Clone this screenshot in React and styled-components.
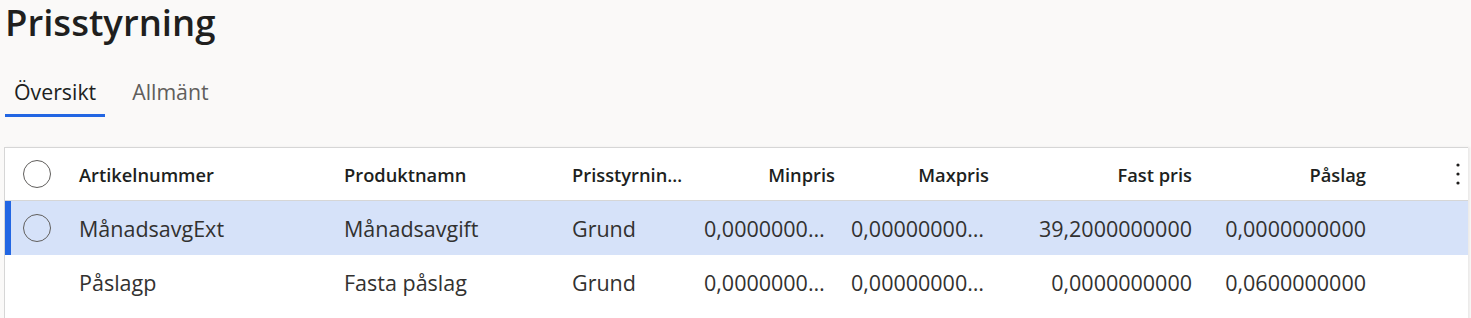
import React from "react";
import styled, { createGlobalStyle } from "styled-components";

const GlobalStyle = createGlobalStyle`
  body {
    margin: 0;
    background: #faf9f8;
    font-family: "Open Sans", "Noto Sans", sans-serif;
    color: #323130;
  }
`;

const Page = styled.div`
  padding: 0 0 0 4px;
  overflow: hidden;
  height: 318px;
`;

const Title = styled.h1`
  margin: 0;
  padding: 0 0 0 1px;
  font-size: 36.5px;
  line-height: 44px;
  font-weight: 600;
  color: #201f1e;
`;

const Tabs = styled.div`
  display: flex;
  gap: 18px;
  margin-top: 33px;
  padding-left: 1px;
`;

const Tab = styled.div`
  padding: 0 9px;
  height: 40px;
  font-size: 21.3px;
  line-height: 30px;
  color: ${(p) => (p.active ? "#201f1e" : "#605e5c")};
  border-bottom: 3px solid ${(p) => (p.active ? "#2266e3" : "transparent")};
  box-sizing: border-box;
`;

const Grid = styled.div`
  margin-top: 30px;
  background: #fff;
  border-top: 1px solid #d6d6d6;
  border-left: 1px solid #d6d6d6;
  margin-right: 3px;
  box-shadow: 2px 0 2px rgba(0, 0, 0, 0.06);
  height: 200px;
`;

const cols = "66px 265px 228px 132px 147px 154px 203px 174px 1fr";

const Row = styled.div`
  display: grid;
  grid-template-columns: ${cols};
  align-items: center;
  position: relative;
  height: ${(p) => (p.header ? "52px" : "54px")};
  background: ${(p) => (p.selected ? "#d6e2f9" : "transparent")};
  border-bottom: ${(p) => (p.header ? "1px solid #d6d6d6" : "none")};
  font-size: ${(p) => (p.header ? "18.3px" : "21.5px")};
  font-weight: ${(p) => (p.header ? 600 : 400)};
  color: ${(p) => (p.header ? "#201f1e" : "#323130")};
`;

const SelectBar = styled.span`
  position: absolute;
  left: 0;
  top: 0;
  bottom: 0;
  width: 6px;
  background: #2266e3;
`;

const Cell = styled.div`
  padding: 0 8px;
  white-space: nowrap;
  overflow: hidden;
  text-overflow: ellipsis;
  text-align: ${(p) => (p.right ? "right" : "left")};
`;

const CheckCell = styled.div`
  display: flex;
  padding-left: 18px;
`;

const Circle = styled.span`
  width: 28px;
  height: 28px;
  box-sizing: border-box;
  border: 1px solid #605e5c;
  border-radius: 50%;
`;

const MoreCell = styled.div`
  display: flex;
  justify-content: flex-end;
  padding-right: 8px;
`;

const columns = [
  { key: "art", label: "Artikelnummer" },
  { key: "prod", label: "Produktnamn" },
  { key: "typ", label: "Prisstyrningstyp" },
  { key: "min", label: "Minpris", right: true },
  { key: "max", label: "Maxpris", right: true },
  { key: "fast", label: "Fast pris", right: true },
  { key: "pal", label: "Påslag", right: true },
];

const rows = [
  {
    id: 1,
    selected: true,
    art: "MånadsavgExt",
    prod: "Månadsavgift",
    typ: "Grund",
    min: "0,0000000000",
    max: "0,0000000000",
    fast: "39,2000000000",
    pal: "0,0000000000",
  },
  {
    id: 2,
    art: "Påslagp",
    prod: "Fasta påslag",
    typ: "Grund",
    min: "0,0000000000",
    max: "0,0000000000",
    fast: "0,0000000000",
    pal: "0,0600000000",
  },
];

const MoreIcon = () => (
  <svg width="4" height="22" viewBox="0 0 4 22">
    <circle cx="2" cy="2" r="1.6" fill="#201f1e" />
    <circle cx="2" cy="11" r="1.6" fill="#201f1e" />
    <circle cx="2" cy="20" r="1.6" fill="#201f1e" />
  </svg>
);

export default function App() {
  return (
    <Page>
      <GlobalStyle />
      <Title>Prisstyrning</Title>
      <Tabs>
        <Tab active>Översikt</Tab>
        <Tab>Allmänt</Tab>
      </Tabs>
      <Grid>
        <Row header>
          <CheckCell>
            <Circle />
          </CheckCell>
          {columns.map((c) => (
            <Cell key={c.key} right={c.right}>
              {c.label}
            </Cell>
          ))}
          <MoreCell>
            <MoreIcon />
          </MoreCell>
        </Row>
        {rows.map((r) => (
          <Row key={r.id} selected={r.selected}>
            {r.selected && <SelectBar />}
            <CheckCell>{r.selected && <Circle />}</CheckCell>
            {columns.map((c) => (
              <Cell key={c.key} right={c.right}>
                {r[c.key]}
              </Cell>
            ))}
            <div />
          </Row>
        ))}
      </Grid>
    </Page>
  );
}
